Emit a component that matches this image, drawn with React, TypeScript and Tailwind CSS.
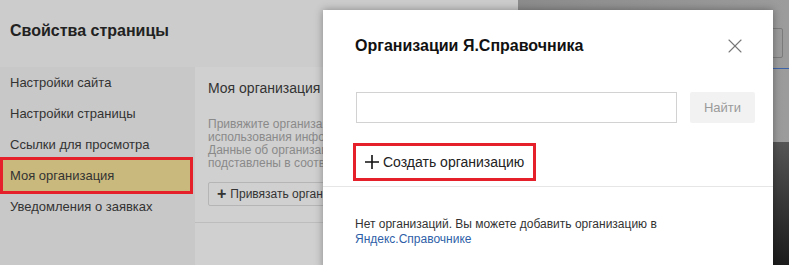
import { X } from 'lucide-react'

const menu = [
  'Настройки сайта',
  'Настройки страницы',
  'Ссылки для просмотра',
  'Моя организация',
  'Уведомления о заявках',
]

export default function App() {
  return (
    <div
      className="relative w-[789px] h-[265px] overflow-hidden flex bg-[#8f8f8f]"
      style={{ fontFamily: '"Liberation Sans", Arial, sans-serif' }}
    >
      {/* Панель свойств (затемнена) */}
      <div className="w-[518px] flex flex-col bg-[#cccccc]">
        <div className="h-[67px] px-[10px] pt-[19px] text-[16px] font-bold text-[#222]">Свойства страницы</div>
        <div className="flex flex-1">
          <div className="w-[195px] bg-[#c8c8c8] flex flex-col">
            {menu.map((item, i) =>
              i === 3 ? (
                <div
                  key={item}
                  className="w-[193px] h-[37px] -my-[3px] border-[3px] border-[#e5202a] bg-[#c9b97c] pl-[7px] flex items-center text-[13px] text-[#333] relative"
                >
                  {item}
                </div>
              ) : (
                <div key={item} className="h-[31px] pl-[10px] flex items-center text-[13px] text-[#333]">
                  {item}
                </div>
              ),
            )}
          </div>
          <div className="flex-1 bg-[#d0d0d0] flex flex-col">
            <div className="pt-[12px] pb-[16px] border-b border-[#bdbdbd]">
              <div className="w-[128px] overflow-hidden pl-[13px]">
                <div className="text-[14px] text-[#333] leading-[18px] whitespace-nowrap">Моя организация</div>
                <div className="mt-[21px] text-[12px] leading-[13px] text-[#8a8a8a] whitespace-nowrap">
                  <div>Привяжите организацию</div>
                  <div>использования информации</div>
                  <div>Данные об организации</div>
                  <div>подставлены в соответствии</div>
                </div>
                <div className="mt-[12px] h-[24px] w-[160px] border border-[#b5b5b5] rounded-[2px] flex items-center px-[8px] gap-[4px] text-[12px] text-[#333] whitespace-nowrap">
                  <span className="text-[16px] font-bold leading-none">+</span>
                  Привязать организацию
                </div>
              </div>
            </div>
          </div>
        </div>
      </div>

      {/* Страница под оверлеем */}
      <div className="flex-1 flex flex-col">
        <div className="h-[142px] bg-gradient-to-r from-[#8c8c8c] to-[#9c9c9c] flex flex-col items-end pt-[28px]">
          <div className="w-[30px] h-[30px] border border-[#7c7c7c] rounded-[2px] mr-[6px]" />
          <div className="w-full h-[1px] bg-[#3d63a8] mt-[10px]" />
        </div>
        <div className="flex-1 bg-gradient-to-b from-[#555] to-[#1c1c1c]" />
      </div>

      {/* Модальное окно */}
      <div className="absolute left-[323px] top-[10px] w-[450px] h-[260px] bg-white shadow-[0_0_8px_rgba(0,0,0,0.35)] flex flex-col">
        <div className="flex items-center justify-between pl-[32px] pr-[26px] pt-[17px] h-[54px]">
          <div className="text-[16px] font-bold text-[#111]">Организации Я.Справочника</div>
          <X size={24} strokeWidth={1.1} className="text-[#777]" />
        </div>
        <div className="flex items-center pl-[33px] pr-[18px] mt-[28px] gap-[13px]">
          <div className="w-[321px] h-[31px] border border-[#d2d2d2]" />
          <div className="w-[65px] h-[31px] bg-[#f2f2f2] rounded-[2px] flex items-center justify-center text-[13px] text-[#9a9a9a]">
            Найти
          </div>
        </div>
        <div className="pl-[30px] mt-[20px] h-[44px] border-b border-[#e6e6e6]">
          <div className="inline-flex items-center h-[38px] border-[3px] border-[#e5202a] pl-[8px] pr-[9px] gap-[3px] text-[14px] text-[#222]">
            <svg width="16" height="16" viewBox="0 0 16 16" className="shrink-0">
              <path d="M8 1v14M1 8h14" stroke="#111" strokeWidth="1.6" />
            </svg>
            Создать организацию
          </div>
        </div>
        <div className="pl-[32px] pt-[30px] text-[12px] leading-[15px] text-[#333]">
          <div>Нет организаций. Вы можете добавить организацию в</div>
          <div className="text-[#2f5fa8]">Яндекс.Справочнике</div>
        </div>
      </div>
    </div>
  )
}
